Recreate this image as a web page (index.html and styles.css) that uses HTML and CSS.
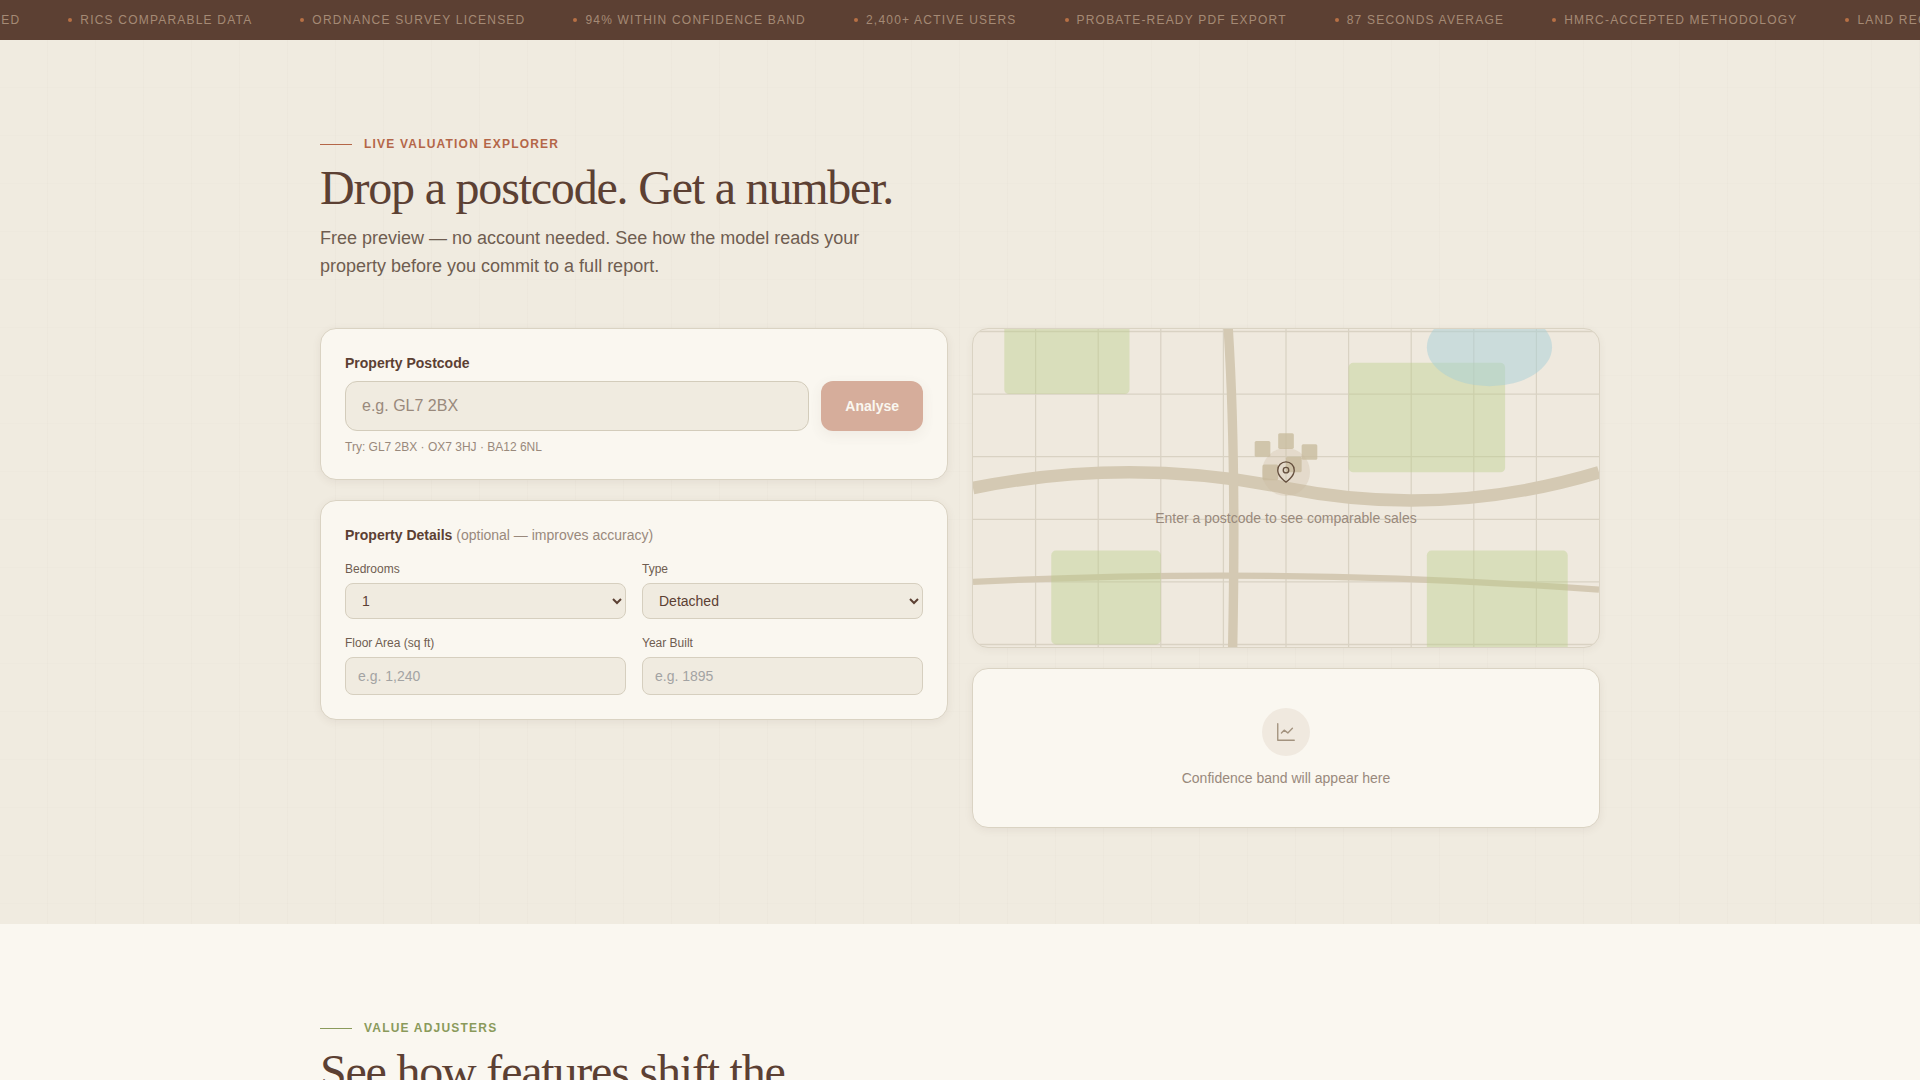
FILE: index.html
```html
<!DOCTYPE html>
<html lang="en-GB">
  <head>
    <meta charset="UTF-8" />
    <meta name="viewport" content="width=device-width, initial-scale=1" />
    <title>Live Valuation Explorer</title>
    <link rel="stylesheet" href="styles.css">
  </head>

  <body>
    <div class="ticker">
      <ul class="ticker-track">
        <li>Land Registry Verified</li>
        <li>RICS Comparable Data</li>
        <li>Ordnance Survey Licensed</li>
        <li>94% Within Confidence Band</li>
        <li>2,400+ Active Users</li>
        <li>Probate-Ready PDF Export</li>
        <li>87 Seconds Average</li>
        <li>HMRC-Accepted Methodology</li>
        <li>Land Registry Verified</li>
      </ul>
    </div>

    <section class="explorer">
      <div class="container">
        <p class="eyebrow">Live Valuation Explorer</p>
        <h2 class="section-title">Drop a postcode. Get a number.</h2>
        <p class="section-lead">
          Free preview — no account needed. See how the model reads your
          property before you commit to a full report.
        </p>

        <div class="explorer-grid">
          <form class="column">
            <div class="card">
              <label class="card-label" for="postcode">Property Postcode</label>
              <div class="postcode-row">
                <input type="text" id="postcode" class="postcode-input" placeholder="e.g. GL7 2BX" />
                <button type="submit" class="analyse-btn" disabled>Analyse</button>
              </div>
              <p class="hint">Try: GL7 2BX · OX7 3HJ · BA12 6NL</p>
            </div>

            <div class="card">
              <h3 class="card-label details-title">
                Property Details <span>(optional — improves accuracy)</span>
              </h3>
              <div class="fields">
                <div class="field">
                  <label for="bedrooms">Bedrooms</label>
                  <select id="bedrooms">
                    <option>1</option>
                    <option>2</option>
                    <option>3</option>
                    <option>4</option>
                    <option>5+</option>
                  </select>
                </div>
                <div class="field">
                  <label for="type">Type</label>
                  <select id="type">
                    <option>Detached</option>
                    <option>Semi-detached</option>
                    <option>Terraced</option>
                    <option>Flat</option>
                  </select>
                </div>
                <div class="field">
                  <label for="area">Floor Area (sq ft)</label>
                  <input type="text" id="area" placeholder="e.g. 1,240" />
                </div>
                <div class="field">
                  <label for="year">Year Built</label>
                  <input type="text" id="year" placeholder="e.g. 1895" />
                </div>
              </div>
            </div>
          </form>

          <div class="column">
            <div class="map">
              <svg class="map-art" viewBox="0 0 400 280" preserveAspectRatio="xMidYMid slice" aria-hidden="true">
                <!-- Street grid -->
                <path class="map-grid" d="M0 40H400M0 80H400M0 120H400M0 160H400M0 200H400M0 240H400M40 0V280M80 0V280M120 0V280M160 0V280M200 0V280M240 0V280M280 0V280M320 0V280M360 0V280" />
                <!-- Roads -->
                <g class="map-roads">
                  <path d="M0 140Q100 120 200 140T400 130" stroke-width="8" />
                  <path d="M160 0Q170 100 165 280" stroke-width="6" />
                  <path d="M0 200Q200 190 400 205" stroke-width="4" />
                </g>
                <!-- Parks -->
                <g class="map-parks">
                  <rect x="20" y="20" width="80" height="60" rx="3" />
                  <rect x="240" y="60" width="100" height="70" rx="3" />
                  <rect x="50" y="180" width="70" height="60" rx="3" />
                  <rect x="290" y="180" width="90" height="80" rx="3" />
                </g>
                <!-- Lake -->
                <ellipse class="map-lake" cx="330" cy="50" rx="40" ry="25" />
                <!-- Buildings -->
                <g class="map-buildings">
                  <rect x="180" y="110" width="10" height="10" rx="1" />
                  <rect x="195" y="105" width="10" height="10" rx="1" />
                  <rect x="210" y="112" width="10" height="10" rx="1" />
                  <rect x="185" y="125" width="10" height="10" rx="1" />
                  <rect x="200" y="120" width="10" height="10" rx="1" />
                </g>
              </svg>
              <div class="map-empty">
                <div class="icon-circle map-icon">
                  <svg width="22" height="22" viewBox="0 0 24 24" aria-hidden="true">
                    <path d="M21 10c0 7-9 13-9 13s-9-6-9-13a9 9 0 0 1 18 0z" />
                    <circle cx="12" cy="10" r="3" />
                  </svg>
                </div>
                <p>Enter a postcode to see comparable sales</p>
              </div>
            </div>

            <div class="card confidence">
              <div class="icon-circle">
                <svg width="22" height="22" viewBox="0 0 24 24" aria-hidden="true">
                  <path d="M3 3v18h18" />
                  <path d="M7 13l3-3 4 3 5-5" />
                </svg>
              </div>
              <p>Confidence band will appear here</p>
            </div>
          </div>
        </div>
      </div>
    </section>

    <section class="adjusters">
      <div class="container">
        <p class="eyebrow eyebrow-green">Value Adjusters</p>
        <h2 class="section-title">See how features shift the<br />estimate.</h2>
      </div>
    </section>
  </body>
</html>
```

FILE: styles.css
```css
:root {
  --brown: #5c4033;
  --brown-soft: #6f5d50;
  --brown-muted: #99897c;
  --terracotta: #b46648;
  --green: #8a9a5b;
  --cream: #faf7f0;
  --sand: #f0ebe0;
  --line: #dad3c3;
}

* {
  box-sizing: border-box;
  margin: 0;
  padding: 0;
}

body {
  font-family: "Liberation Sans", Arial, sans-serif;
  font-size: 14px;
  line-height: 20px;
  color: var(--brown);
  background: var(--cream);
  overflow-x: hidden;
}

/* Ticker */
.ticker {
  height: 40px;
  background: var(--brown);
  overflow: hidden;
}

.ticker-track {
  display: flex;
  align-items: center;
  gap: 48px;
  width: max-content;
  height: 100%;
  list-style: none;
  transform: translateX(-173px);
}

.ticker-track li {
  display: flex;
  align-items: center;
  gap: 8px;
  font-size: 12px;
  line-height: 16px;
  letter-spacing: 0.1em;
  text-transform: uppercase;
  white-space: nowrap;
  color: #a58a75;
}

.ticker-track li::before {
  content: "";
  width: 4px;
  height: 4px;
  border-radius: 50%;
  background: #b87045;
}

/* Sections */
.explorer,
.adjusters {
  padding: 96px 32px;
}

.explorer {
  background-color: var(--sand);
  background-image:
    repeating-linear-gradient(90deg, transparent 0 47px, rgba(92, 64, 51, 0.02) 47px 48px),
    repeating-linear-gradient(180deg, transparent 0 47px, rgba(92, 64, 51, 0.01) 47px 48px);
}

.container {
  max-width: 1280px;
  margin: 0 auto;
}

.eyebrow {
  display: flex;
  align-items: center;
  gap: 12px;
  margin-bottom: 12px;
  font-size: 12px;
  font-weight: bold;
  line-height: 16px;
  letter-spacing: 0.1em;
  text-transform: uppercase;
  color: var(--terracotta);
}

.eyebrow::before {
  content: "";
  width: 32px;
  height: 1px;
  background: currentColor;
}

.eyebrow-green {
  color: var(--green);
}

.section-title {
  margin-bottom: 12px;
  font-family: "Liberation Serif", "Times New Roman", serif;
  font-size: 48px;
  font-weight: normal;
  line-height: 48px;
  letter-spacing: -0.025em;
}

.section-lead {
  max-width: 576px;
  margin-bottom: 48px;
  font-size: 18px;
  line-height: 28px;
  color: var(--brown-soft);
}

.explorer-grid {
  display: grid;
  grid-template-columns: 1fr 1fr;
  gap: 24px;
  align-items: start;
}

.column {
  display: flex;
  flex-direction: column;
  gap: 20px;
}

/* Cards */
.card {
  padding: 24px;
  background: var(--cream);
  border: 1px solid var(--line);
  border-radius: 16px;
  box-shadow: 0 2px 8px rgba(92, 64, 51, 0.08);
}

.card-label {
  display: block;
  margin-bottom: 8px;
  font-size: 14px;
  font-weight: bold;
  line-height: 20px;
}

.postcode-row {
  display: flex;
  gap: 12px;
  margin-bottom: 8px;
}

.postcode-input {
  flex: 1;
  min-width: 0;
  height: 50px;
  padding: 0 16px;
  font: inherit;
  font-size: 16px;
  color: var(--brown);
  background: var(--sand);
  border: 1px solid #d3ccbb;
  border-radius: 12px;
}

.postcode-input::placeholder {
  color: var(--brown-muted);
}

.analyse-btn {
  padding: 0 24px;
  font: inherit;
  font-weight: bold;
  color: var(--cream);
  background: var(--terracotta);
  border: 0;
  border-radius: 12px;
  box-shadow: 0 4px 12px rgba(92, 64, 51, 0.12);
  cursor: pointer;
}

.analyse-btn:disabled {
  opacity: 0.5;
  cursor: default;
}

.hint {
  font-size: 12px;
  line-height: 16px;
  color: var(--brown-muted);
}

.details-title {
  margin-bottom: 16px;
}

.details-title span {
  font-weight: normal;
  color: var(--brown-muted);
}

.fields {
  display: grid;
  grid-template-columns: 1fr 1fr;
  gap: 16px;
}

.field label {
  display: block;
  margin-bottom: 6px;
  font-size: 12px;
  line-height: 16px;
  color: var(--brown-soft);
}

.field input,
.field select {
  display: block;
  width: 100%;
  height: 38px;
  padding: 0 12px;
  font: inherit;
  color: var(--brown);
  background-color: var(--sand);
  border: 1px solid #d6cfbf;
  border-radius: 8px;
}

.field select {
  height: 36px;
}

.field input::placeholder {
  color: #a3a3a3;
}

/* Map */
.map {
  position: relative;
  height: 320px;
  background: #efe9de;
  border: 1px solid var(--line);
  border-radius: 16px;
  box-shadow: 0 2px 8px rgba(92, 64, 51, 0.06);
  overflow: hidden;
}

.map-art {
  display: block;
  width: 100%;
  height: 100%;
}

.map-grid {
  fill: none;
  stroke: #d9d2c3;
  stroke-width: 0.8;
}

.map-roads {
  fill: none;
  stroke: #d4c9b3;
}

.map-parks {
  fill: rgba(184, 205, 136, 0.4);
}

.map-lake {
  fill: rgba(168, 208, 216, 0.5);
}

.map-buildings {
  fill: #c8bb9e;
  fill-opacity: 0.8;
}

.map-empty {
  position: absolute;
  inset: 0;
  display: flex;
  flex-direction: column;
  align-items: center;
  justify-content: center;
  gap: 12px;
  color: var(--brown-muted);
}

.icon-circle {
  display: flex;
  align-items: center;
  justify-content: center;
  width: 48px;
  height: 48px;
  border-radius: 50%;
  background: #f0e9df;
}

.icon-circle svg {
  fill: none;
  stroke: #a3937f;
  stroke-width: 1.5;
  stroke-linecap: round;
  stroke-linejoin: round;
}

.map-icon {
  background: rgba(201, 186, 160, 0.3);
}

.map-icon svg {
  stroke: #66503f;
}

.confidence {
  display: flex;
  flex-direction: column;
  align-items: center;
  justify-content: center;
  gap: 12px;
  min-height: 160px;
  color: var(--brown-muted);
}

@media (max-width: 900px) {
  .explorer-grid {
    grid-template-columns: 1fr;
  }
}
```
